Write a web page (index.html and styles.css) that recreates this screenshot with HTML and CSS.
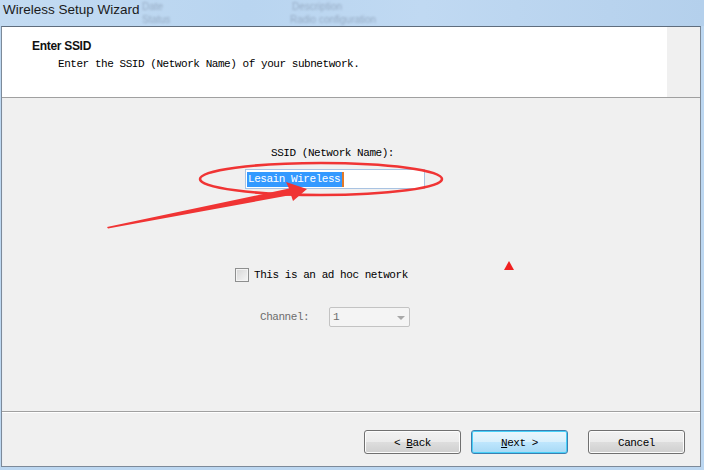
FILE: index.html
```html
<!DOCTYPE html>
<html>
<head>
<meta charset="utf-8">
<link rel="stylesheet" href="styles.css">
</head>
<body>
<div class="screen">
  <div class="titlebar">
    <span class="title">Wireless Setup Wizard</span>
    <span class="ghost g1">Date</span>
    <span class="ghost g2">Description</span>
    <span class="ghost g3">Status</span>
    <span class="ghost g4">Radio configuration</span>
  </div>
  <div class="dialog">
    <div class="header">
      <div class="header-main">
        <div class="h-title">Enter SSID</div>
        <div class="h-desc mono">Enter the SSID (Network Name) of your subnetwork.</div>
      </div>
      <div class="header-strip"></div>
    </div>
    <div class="content">
      <div class="ssid-label mono">SSID (Network Name):</div>
      <div class="textbox mono"><span class="sel">Lesain Wireless</span><span class="caret"></span></div>
      <label class="adhoc mono"><span class="checkbox"></span>This is an ad hoc network</label>
      <div class="channel-row mono">
        <span class="ch-label">Channel:</span>
        <span class="combo"><span>1</span><span class="combo-arrow"></span></span>
      </div>
    </div>
    <div class="footer">
      <button class="btn mono">&lt; <u>B</u>ack</button>
      <button class="btn btn-default mono"><u>N</u>ext &gt;</button>
      <button class="btn btn-cancel mono">Cancel</button>
    </div>
  </div>
  <svg class="annot" width="704" height="470" viewBox="0 0 704 470">
    <ellipse cx="321" cy="179" rx="121" ry="16" fill="none" stroke="#f03434" stroke-width="2.6"/>
    <polygon points="107,227 289,188.5 286,182 307,189 293,201 291,195 108,228.5" fill="#f03434"/>
    <polygon points="509,261 514,270 504,270" fill="#f02020"/>
  </svg>
</div>
</body>
</html>
```
FILE: styles.css
```css
html, body {
  margin: 0;
  padding: 0;
}
body {
  width: 704px;
  height: 470px;
  overflow: hidden;
  background: #bcd7f1;
}
.screen {
  position: relative;
  width: 704px;
  height: 470px;
  display: flex;
  flex-direction: column;
}
.mono {
  font-family: "Liberation Mono", "DejaVu Sans Mono", monospace;
  font-size: 11px;
  letter-spacing: -0.45px;
  color: #000;
}
.titlebar {
  position: relative;
  height: 26px;
  flex: none;
  background: linear-gradient(90deg, #c3dbf2 0%, #b9d5f0 35%, #c0d9f2 60%, #b4d0ec 100%);
  overflow: hidden;
}
.title {
  position: absolute;
  left: 3px;
  top: 2px;
  font-family: "Liberation Sans", Arial, sans-serif;
  font-size: 13.5px;
  color: #1b1b1b;
  z-index: 2;
}
.ghost {
  position: absolute;
  font-family: "Liberation Sans", Arial, sans-serif;
  font-size: 10px;
  line-height: 11px;
  color: #8598b0;
  filter: blur(1.3px);
  opacity: 0.7;
}
.g1 { left: 142px; top: 1px; }
.g2 { left: 292px; top: 1px; }
.g3 { left: 142px; top: 14px; }
.g4 { left: 290px; top: 14px; }
.dialog {
  margin-left: 1px;
  width: 698px;
  height: 439px;
  flex: none;
  border: 1px solid #7d8a99;
  border-top-color: #5f6d7d;
  background: #f0f0f0;
  display: flex;
  flex-direction: column;
  box-shadow: inset 1px 0 0 #e9eef4;
}
.header {
  height: 70px;
  flex: none;
  display: flex;
  border-bottom: 1px solid #a0a0a0;
  background: #fff;
}
.header-main {
  flex: 1;
  padding: 12px 0 0 30px;
}
.header-strip {
  width: 33px;
  background: #f0f0f0;
}
.h-title {
  font-family: "Liberation Sans", Arial, sans-serif;
  font-weight: bold;
  font-size: 12px;
  letter-spacing: -0.3px;
  color: #111;
  line-height: 15px;
}
.h-desc {
  margin-top: 3px;
  padding-left: 26px;
  line-height: 14px;
}
.content {
  flex: 1;
  display: flex;
  flex-direction: column;
  align-items: flex-start;
  border-bottom: 1px solid #a0a0a0;
  box-shadow: 0 1px 0 #fff;
}
.ssid-label {
  margin: 48px 0 0 269px;
  line-height: 14px;
}
.textbox {
  margin: 9px 0 0 243px;
  width: 177px;
  height: 18px;
  border: 1px solid #a9c3e2;
  background: #fff;
  display: flex;
  align-items: center;
  padding-left: 1px;
}
.sel {
  background: #3399ff;
  color: #fff;
  line-height: 15px;
  padding: 0 2px 0 1px;
}
.caret {
  width: 2px;
  height: 15px;
  background: #e37a2a;
}
.adhoc {
  margin: 79px 0 0 233px;
  display: flex;
  align-items: center;
  line-height: 14px;
}
.checkbox {
  width: 12px;
  height: 12px;
  border: 1px solid #8e8f8f;
  background: linear-gradient(135deg, #d6d6d6, #f6f6f6);
  box-shadow: inset 0 0 0 1px #f4f4f4;
  margin-right: 5px;
}
.channel-row {
  margin: 25px 0 0 258px;
  display: flex;
  align-items: center;
}
.ch-label {
  color: #6d6d6d;
  width: 69px;
}
.combo {
  height: 18px;
  border: 1px solid #c3c3c3;
  border-radius: 2px;
  background: #f4f4f4;
  display: flex;
  align-items: center;
  justify-content: space-between;
  padding: 0 4px 0 3px;
  box-sizing: content-box;
  width: 72px;
  color: #6d6d6d;
}
.combo-arrow {
  width: 0;
  height: 0;
  border-left: 4px solid transparent;
  border-right: 4px solid transparent;
  border-top: 4px solid #a8a8a8;
  margin-top: 2px;
}
.footer {
  height: 54px;
  flex: none;
  display: flex;
  align-items: flex-start;
  justify-content: flex-end;
  padding: 18px 15px 0 0;
  box-sizing: border-box;
  gap: 10px;
}
.btn {
  width: 97px;
  height: 24px;
  border: 1px solid #707070;
  border-radius: 3px;
  background: linear-gradient(#f2f2f2 0%, #ebebeb 48%, #dddddd 52%, #cfcfcf 100%);
  box-shadow: inset 0 0 0 1px #fcfcfc;
  padding: 2px 0 0;
  margin: 0;
  text-align: center;
}
.btn u {
  text-decoration: underline;
}
.btn-default {
  border-color: #3c7fb1;
  background: linear-gradient(#eaf6fd 0%, #d9f0fc 48%, #bee6fd 52%, #a7d9f5 100%);
  box-shadow: inset 0 0 0 1px #48d0f8;
}
.btn-cancel {
  margin-left: 10px;
}
.annot {
  position: absolute;
  left: 0;
  top: 0;
  pointer-events: none;
}
```
